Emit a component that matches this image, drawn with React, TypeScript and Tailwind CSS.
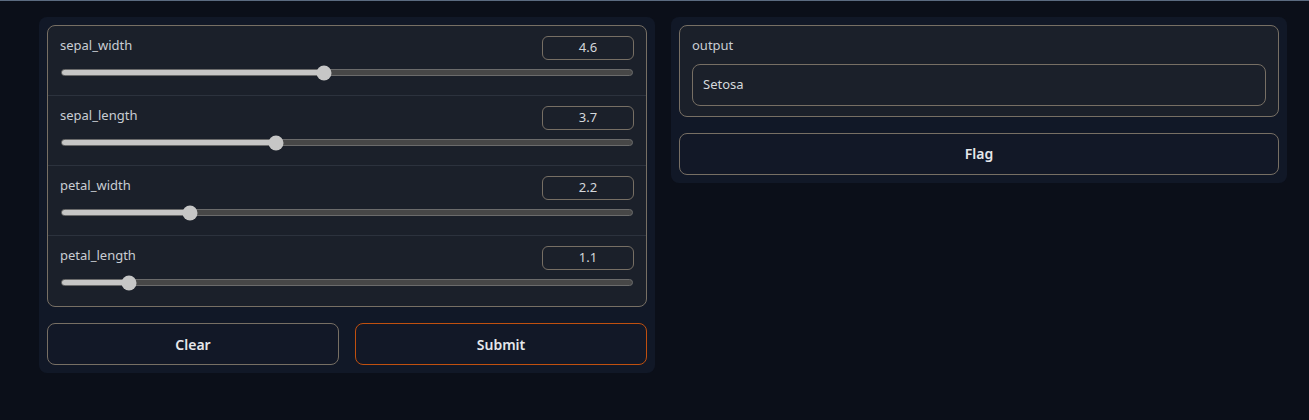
const font = { fontFamily: '"Source Sans Pro", "Noto Sans", sans-serif' };

const sliders = [
  { label: "sepal_width", value: "4.6", pct: 46 },
  { label: "sepal_length", value: "3.7", pct: 37.5 },
  { label: "petal_width", value: "2.2", pct: 22.5 },
  { label: "petal_length", value: "1.1", pct: 11.7 },
];

function SliderRow({ label, value, pct, last }: { label: string; value: string; pct: number; last: boolean }) {
  return (
    <div className={`h-[70px] px-3 pt-[10px] ${last ? "" : "border-b border-[#2c323d]"}`}>
      <div className="flex items-start justify-between">
        <span className="text-[13px] text-[#c9cdd3]">{label}</span>
        <div className="flex h-[24px] w-[92px] items-center justify-center rounded-md border border-[#776f64] text-[13px] text-[#d5d8dc]">
          {value}
        </div>
      </div>
      <div className="relative mx-[1px] mt-[9px] h-[7px] rounded-full border border-[#6b6b6b] bg-[#474747]">
        <div className="h-full rounded-full bg-[#c6c6c6]" style={{ width: `${pct}%` }} />
        <div
          className="absolute top-1/2 h-[15px] w-[15px] -translate-x-1/2 -translate-y-1/2 rounded-full bg-[#c6c6c6]"
          style={{ left: `${pct}%` }}
        />
      </div>
    </div>
  );
}

export default function App() {
  return (
    <div className="min-h-[420px] border-t border-[#5b6b80] bg-[#0b0f19] pl-[39px] pr-[22px] pt-[16px]" style={font}>
      <div className="flex items-start gap-4">
        <div className="flex w-[616px] shrink-0 flex-col gap-4 rounded-lg bg-[#111827] p-2">
          <div className="rounded-lg border border-[#776f64] bg-[#1b202a]">
            {sliders.map((s, i) => (
              <SliderRow key={s.label} {...s} last={i === sliders.length - 1} />
            ))}
          </div>
          <div className="flex gap-4">
            <button className="h-[42px] flex-1 rounded-lg border border-[#776f64] bg-[#121827] text-[14px] font-semibold text-[#e5e7eb]">
              Clear
            </button>
            <button className="h-[42px] flex-1 rounded-lg border border-[#c0500f] bg-[#121827] text-[14px] font-semibold text-[#e5e7eb]">
              Submit
            </button>
          </div>
        </div>
        <div className="flex w-[616px] shrink-0 flex-col gap-4 rounded-lg bg-[#111827] p-2">
          <div className="rounded-lg border border-[#776f64] bg-[#1b202a] px-3 pb-[10px] pt-[10px]">
            <div className="text-[13px] text-[#c9cdd3]">output</div>
            <div className="mt-[8px] flex h-[42px] items-center rounded-lg border border-[#776f64] px-[10px] text-[13px] text-[#d5d8dc]">
              Setosa
            </div>
          </div>
          <button className="h-[42px] rounded-lg border border-[#776f64] bg-[#121827] text-[14px] font-semibold text-[#e5e7eb]">
            Flag
          </button>
        </div>
      </div>
    </div>
  );
}
